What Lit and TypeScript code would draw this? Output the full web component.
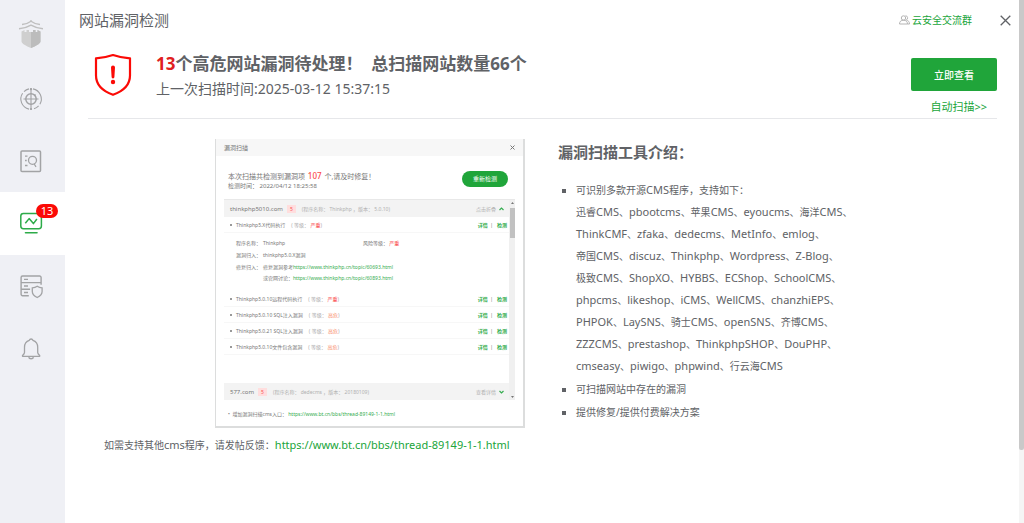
import { LitElement, html, css, svg } from "lit";
import { customElement, property, state } from "lit/decorators.js";
import { classMap } from "lit/directives/class-map.js";

const POST_URL = "https://www.bt.cn/bbs/thread-89149-1-1.html";

const icons = {
  target: svg`<g stroke-width="1.1">
    <circle cx="11" cy="11" r="5.200" stroke-width="1.500"/>
    <path d="M11 0v22M3.500 11h15M9 .9A10.300 10.300 0 0 0 4 3.600M2.600 5.300a10.300 10.300 0 0 0 6.400 15.800M13 .9a10.300 10.300 0 0 1 6.900 15.300M18.600 17.900a10.300 10.300 0 0 1-4.600 2.900"/>
    <path d="M14.300 7.700l1.200-1.200" stroke-width="1.500"/></g>
    <circle cx="11" cy="1.200" r="1.100" fill="currentColor" stroke="none"/><circle cx="11" cy="21" r="1.100" fill="currentColor" stroke="none"/>`,
  report: svg`<rect x="1" y="1" width="19.500" height="20.500" rx="1" stroke-width="1.500"/>
    <circle cx="12.500" cy="10.300" r="4" stroke-width="1.300"/>
    <path d="M14.200 14l1.800 2.800M5 6.200h2.500M5 10.500h1.700M5 15.500h2.500" stroke-width="1.300"/>`,
  monitor: svg`<rect x="0.800" y="1.500" width="20.600" height="15.200" rx="2.600" stroke-width="1.500"/>
    <path d="M5.300 11.300l3.800-4.700 4.300 5 3.500-4.600" stroke-width="1.500" stroke-linejoin="round"/>
    <path d="M5.500 20.700h11.500" stroke-width="1.600" stroke-linecap="round"/>`,
  server: svg`<path d="M8.800 20.700H2.600a1.500 1.500 0 0 1-1.500-1.500V2.500A1.500 1.500 0 0 1 2.600 1h17a1.500 1.500 0 0 1 1.500 1.500v7.300M1.100 7.600h20M1.100 14.300h9" stroke-width="1.400"/>
    <path d="M4 4.300h4M4 11h4M4 17.500h4" stroke-width="1.300"/>
    <path d="M17.200 11.300c1.600 1.100 3 1.500 4.900 1.600v3.600c0 2.700-2 4.600-4.900 6-2.900-1.400-4.900-3.300-4.900-6v-3.600c1.900-.1 3.300-.5 4.900-1.600z" stroke-width="1.300"/>`,
  bell: svg`<path d="M9.300 3.300a1.900 1.900 0 0 1 3.600 0c3.300 1 4.800 3.500 4.800 7v5.200c0 1.200.6 1.800 2 3v.8H2.500v-.8c1.400-1.200 2-1.800 2-3v-5.200c0-3.500 1.500-6 4.800-7z" stroke-width="1.300" stroke-linejoin="round"/>
    <path d="M8.700 20.200a2.500 2.200 0 0 0 4.800 0" stroke-width="1.500"/>`,
};

type IconName = keyof typeof icons;

interface NavItem {
  icon: IconName;
  label: string;
  badge?: number;
}

const NAV: NavItem[] = [
  { icon: "target", label: "首页" },
  { icon: "report", label: "日志" },
  { icon: "monitor", label: "漏洞检测", badge: 13 },
  { icon: "server", label: "服务器防护" },
  { icon: "bell", label: "告警" },
];

@customElement("side-nav")
class SideNav extends LitElement {
  @state() private active = 2;

  static styles = css`
    :host { display: block; background: #eff0f5; }
    .logo { display: flex; justify-content: center; padding: 19px 0 20px; margin-right: 3px; }
    .logo svg { width: 26px; height: 29px; display: block; }
    nav { display: flex; flex-direction: column; }
    .item {
      height: 62px; border: 0; padding: 0 3px 0 0; background: none; cursor: pointer;
      display: flex; align-items: center; justify-content: center; color: #a2a3a5;
    }
    .item.active { background: #fff; color: #2dab49; height: 63px; }
    .glyph { position: relative; display: block; width: 22px; height: 23px; }
    .glyph svg { width: 22px; height: 23px; display: block; fill: none; stroke: currentColor; overflow: visible; }
    .badge {
      position: absolute; left: 16px; top: -8px; height: 14px; min-width: 22px; border-radius: 7px;
      background: #fb0a06; color: #fff; font: 11px/14px "Noto Sans", sans-serif; text-align: center;
    }
  `;

  render() {
    return html`
      <div class="logo">
        <svg viewBox="0 0 26 29" aria-hidden="true">
          <path d="M3.500 12.500l3-1.500v2h2v-2h2.500v2h4v-2h2.500v2h2v-2l3 1.500v10c0 2-4.500 4.500-9.500 6.500-5-2-9.500-4.500-9.500-6.500z" fill="#cfcfcf"/>
          <path d="M13 13h2v-2h2.500v2h2v-2l3 1.500v10c0 2-4.500 4.500-9.500 6.500z" fill="#bcbcbc"/>
          <path d="M4 5.500c3.500 0 6.500-1.500 9-3.300 2.500 1.800 5.500 3.300 9 3.300M1 9.700c5-.2 9-1.700 12-3.500 3 1.800 7 3.300 12 3.500M13 1v2" fill="none" stroke="#bfbfbf" stroke-width="1.400"/>
        </svg>
      </div>
      <nav>
        ${NAV.map((n, i) => html`
          <button class=${classMap({ item: true, active: i === this.active })} aria-label=${n.label}
            @click=${() => (this.active = i)}>
            <span class="glyph">
              <svg viewBox="0 0 22 23">${icons[n.icon]}</svg>
              ${n.badge ? html`<span class="badge">${n.badge}</span>` : null}
            </span>
          </button>`)}
      </nav>`;
  }
}

interface Risk { name: string; level: string; severe?: boolean; }

const RISKS: Risk[] = [
  { name: "Thinkphp5.0.10远程代码执行", level: "严重", severe: true },
  { name: "Thinkphp5.0.10 SQL注入漏洞", level: "高危" },
  { name: "Thinkphp5.0.21 SQL注入漏洞", level: "高危" },
  { name: "Thinkphp5.0.10文件包含漏洞", level: "高危" },
];

@customElement("scan-preview")
class ScanPreview extends LitElement {
  static styles = css`
    :host {
      display: block; box-sizing: border-box; border: 1px solid #dcdddd; border-top: 0; border-right-width: 2px;
      border-bottom-width: 2px; background: #fff; color: #777;
      font: 5px/12px "Noto Sans", "Noto Sans CJK SC", sans-serif;
    }
    a { color: #35ad50; text-decoration: none; }
    button { font: inherit; border: 0; cursor: pointer; }
    .bar { display: flex; justify-content: space-between; align-items: center; height: 17px; background: #f7f7f7; padding: 0 8px; font-size: 6px; }
    .bar svg { width: 5px; height: 5px; stroke: #777; }
    .summary { display: flex; justify-content: space-between; padding: 15px 15px 9px 12px; }
    .count { font-size: 7px; line-height: 10px; }
    .count b { color: #fa4b4b; font-size: 8px; font-weight: 500; margin: 0 1px; }
    .date { font-size: 6px; line-height: 8px; }
    .again { width: 46px; height: 16px; border-radius: 8px; background: #20a53a; color: #fff; padding: 0; font-size: 6px; }
    .panel { display: grid; grid-template-columns: 1fr 6px; margin: 0 8px; border-top: 1px solid #e8e8e8; }
    .track { background: #f0f0f0; display: flex; flex-direction: column; align-items: center; }
    .track i { display: block; width: 5px; height: 30px; background: #c1c1c1; margin: 2px 0 auto; }
    .track svg { width: 3px; height: 2px; margin: 2px 0; fill: #777; }
    .site { display: flex; align-items: center; height: 17px; background: #f3f3f3; padding: 0 5px 0 6px; color: #b0b0b0; }
    .site strong { font-weight: 400; font-size: 6px; color: #777; }
    .num { background: #ffdede; color: #fa5050; padding: 0 3px; line-height: 8px; margin: 0 6px 0 4px; }
    .site .fold { margin-left: auto; }
    .site svg { width: 5px; height: 4px; margin-left: 3px; fill: none; stroke: #35ad50; stroke-width: 1.200; }
    .risk { display: flex; align-items: center; height: 16px; padding: 0 2px 0 6px; border-bottom: 1px solid #f7f7f7; box-sizing: border-box; white-space: pre; }
    .risk::before { content: ""; width: 2px; height: 2px; background: #777; margin-right: 4px; border-radius: 1px; }
    .risk .lv { color: #aaa; margin-left: 6px; }
    .lv em { font-style: normal; color: #f88763; }
    .lv em.severe, .info em { font-style: normal; color: #fa5050; }
    .ops { margin-left: auto; }
    .ops a { font-weight: 600; }
    .info { display: grid; grid-template-columns: 27px 100px 1fr; padding: 4px 0 8px 12px; line-height: 12px; }
    .info .wide { grid-column: 2 / 4; }
    .info .tight { line-height: 10px; }
    .rest { height: 28px; }
    .foot { padding: 8px 12px 7px; }
  `;

  private ops() {
    return html`<span class="ops"><a href="#">详情</a>  |   <a href="#">检测</a></span>`;
  }

  private risk(r: Risk) {
    return html`<div class="risk">${r.name}<span class="lv">( 等级： <em class=${classMap({ severe: !!r.severe })}>${r.level}</em>)</span>${this.ops()}</div>`;
  }

  render() {
    return html`
      <div class="bar"><span>漏洞扫描</span><svg viewBox="0 0 5 5"><path d="M.5.5l4 4M4.500.5l-4 4"/></svg></div>
      <div class="summary">
        <div>
          <div class="count">本次扫描共检测到漏洞项 <b>107</b> 个,请及时修复！</div>
          <div class="date">检测时间： 2022/04/12 18:25:58</div>
        </div>
        <button class="again">重新检测</button>
      </div>
      <div class="panel">
        <div>
          <div class="site"><strong>thinkphp5010.com</strong><span class="num">5</span>(程序名称： Thinkphp ，版本： 5.0.10)
            <span class="fold">点击折叠</span><svg viewBox="0 0 5 4"><path d="M.5 3l2-2 2 2"/></svg></div>
          ${this.risk({ name: "Thinkphp5.X代码执行", level: "严重", severe: true })}
          <div class="info">
            <span>程序名称：</span><span>Thinkphp</span><span>风险等级： <em>严重</em></span>
            <span>漏洞归入：</span><span class="wide">thinkphp5.0.X漏洞</span>
            <span>修复归入：</span><span class="wide">修复漏洞参考<a href="#">https://www.thinkphp.cn/topic/60693.html</a></span>
            <span></span><span class="wide tight">或官网讨论：<a href="#">https://www.thinkphp.cn/topic/60893.html</a></span>
          </div>
          ${RISKS.map((r) => this.risk(r))}
          <div class="rest"></div>
          <div class="site"><strong>577.com</strong><span class="num">5</span>(程序名称： dedecms ，版本： 20180109)
            <span class="fold">查看详情</span><svg viewBox="0 0 5 4"><path d="M.5 1l2 2 2-2"/></svg></div>
        </div>
        <div class="track"><svg viewBox="0 0 3 2"><path d="M0 2h3l-1.500-2z"/></svg><i></i><svg viewBox="0 0 3 2"><path d="M0 0h3l-1.500 2z"/></svg></div>
      </div>
      <div class="foot">•&nbsp; 增加漏洞扫描cms入口： <a href=${POST_URL}>${POST_URL}</a></div>`;
  }
}

const CMS_LINES = [
  "迅睿CMS、pbootcms、苹果CMS、eyoucms、海洋CMS、",
  "ThinkCMF、zfaka、dedecms、MetInfo、emlog、",
  "帝国CMS、discuz、Thinkphp、Wordpress、Z-Blog、",
  "极致CMS、ShopXO、HYBBS、ECShop、SchoolCMS、",
  "phpcms、likeshop、iCMS、WellCMS、chanzhiEPS、",
  "PHPOK、LaySNS、骑士CMS、openSNS、齐博CMS、",
  "ZZZCMS、prestashop、ThinkphpSHOP、DouPHP、",
  "cmseasy、piwigo、phpwind、行云海CMS",
];

/** Sets Latin words one size above the Chinese text around them. */
const mixed = (text: string) =>
  text.split(/([\x21-\x7e]+)/).map((run, i) => (i % 2 ? html`<span class="latin">${run}</span>` : run));

@customElement("app-root")
class AppRoot extends LitElement {
  @property({ type: Number }) risks = 13;
  @property({ type: Number }) sites = 66;

  static styles = css`
    :host {
      display: grid; grid-template-columns: 65px minmax(0, 1fr) 5px; min-height: 100vh; background: #fff;
      color: #606266; font: 10px/22px "Noto Sans", "Noto Sans CJK SC", sans-serif;
    }
    a { color: #20a53a; text-decoration: none; }
    button { font: inherit; cursor: pointer; border: 0; }
    h1, h2, h3, p, ul { margin: 0; }
    .latin { font-size: 11px; }
    .top { display: flex; align-items: center; height: 40px; padding: 0 8px 0 14px; }
    h1 { font-size: 15px; font-weight: 400; flex: 1; }
    .group { display: flex; align-items: center; gap: 2px; }
    .group svg { width: 11px; height: 10px; fill: none; stroke: #b4b4b4; }
    .close { background: none; padding: 0; margin-left: 28px; width: 11px; height: 22px; display: flex; align-items: center; }
    .close svg { width: 11px; height: 11px; stroke: #606266; stroke-width: 1.300; }
    .status { display: flex; margin: 0 22px 0 23px; padding: 10px 0 0 6px; height: 68px; border-bottom: 1px solid #e6e7ea; }
    .shield { width: 38px; height: 44px; margin: 3px 24px 0 0; flex: none; }
    .words { flex: 1; }
    h2 { font-size: 17px; line-height: 27px; white-space: pre; }
    h2 em { font-style: normal; color: #e02020; }
    .last { font-size: 14px; line-height: 24px; }
    .act { display: flex; flex-direction: column; align-items: flex-end; padding-top: 8px; gap: 5px; }
    .check { width: 86px; height: 34px; background: #20a53a; color: #fff; border-radius: 2px; font-weight: 500; padding: 0; }
    .auto { font-size: 11px; margin-right: 10px; }
    .content { display: flex; gap: 33px; padding: 20px 22px 0 150px; }
    scan-preview { flex: 0 0 310px; height: 289px; }
    h3 { font-size: 15px; line-height: 26px; margin-bottom: 14px; }
    ul { padding: 0 0 0 18px; list-style: square; }
    li { margin-bottom: 1px; }
    .line { display: block; height: 22px; white-space: nowrap; }
    .note { padding: 6px 22px 0 39px; }
    .scroll { background: #f5f5f5; }
    .thumb { height: 86vh; background: #c9c9c9; border-radius: 0 0 2px 2px; }
  `;

  render() {
    return html`
      <side-nav></side-nav>
      <main>
        <header class="top">
          <h1>网站漏洞检测</h1>
          <a class="group" href="#">
            <svg viewBox="0 0 11 10"><circle cx="4.500" cy="3" r="2.200"/><path d="M.5 9c0-2.500 1.500-3.800 4-3.800S8.500 6.500 8.500 9zM6.500.7a2.200 2.200 0 0 1 .8 4.200C9.500 5.500 10.500 7 10.500 9h-2"/></svg>
            云安全交流群
          </a>
          <button class="close" aria-label="关闭"><svg viewBox="0 0 11 11"><path d="M.7.7l9.600 9.600M10.300.7L.7 10.300"/></svg></button>
        </header>
        <section class="status">
          <svg class="shield" viewBox="0 0 38 44">
            <path d="M19 2c5.500 1.900 11 3 17 3.300v17.200c0 9-6.500 15.500-17 19.300C8.500 38 2 31.500 2 22.500V5.300C8 5 13.500 3.900 19 2z" fill="none" stroke="#fb0a06" stroke-width="2.200" stroke-linejoin="round"/>
            <path d="M17 14.500a2 2 0 0 1 4 0l-.6 9.500a1.400 1.400 0 0 1-2.800 0z" fill="#fb0a06"/><circle cx="19" cy="29" r="2.200" fill="#fb0a06"/>
          </svg>
          <div class="words">
            <h2><em>${this.risks}</em>个高危网站漏洞待处理！  总扫描网站数量${this.sites}个</h2>
            <p class="last">上一次扫描时间:2025-03-12 15:37:15</p>
          </div>
          <div class="act">
            <button class="check">立即查看</button>
            <a class="auto" href="#">自动扫描&gt;&gt;</a>
          </div>
        </section>
        <section class="content">
          <scan-preview></scan-preview>
          <div>
            <h3>漏洞扫描工具介绍：</h3>
            <ul>
              <li>${mixed("可识别多款开源CMS程序，支持如下：")}
                ${CMS_LINES.map((l) => html`<span class="line">${mixed(l)}</span>`)}
              </li>
              <li>可扫描网站中存在的漏洞</li>
              <li>提供修复/提供付费解决方案</li>
            </ul>
          </div>
        </section>
        <p class="note">${mixed("如需支持其他cms程序，请发帖反馈：")}<a class="latin" href=${POST_URL}>${POST_URL}</a></p>
      </main>
      <div class="scroll"><div class="thumb"></div></div>`;
  }
}
